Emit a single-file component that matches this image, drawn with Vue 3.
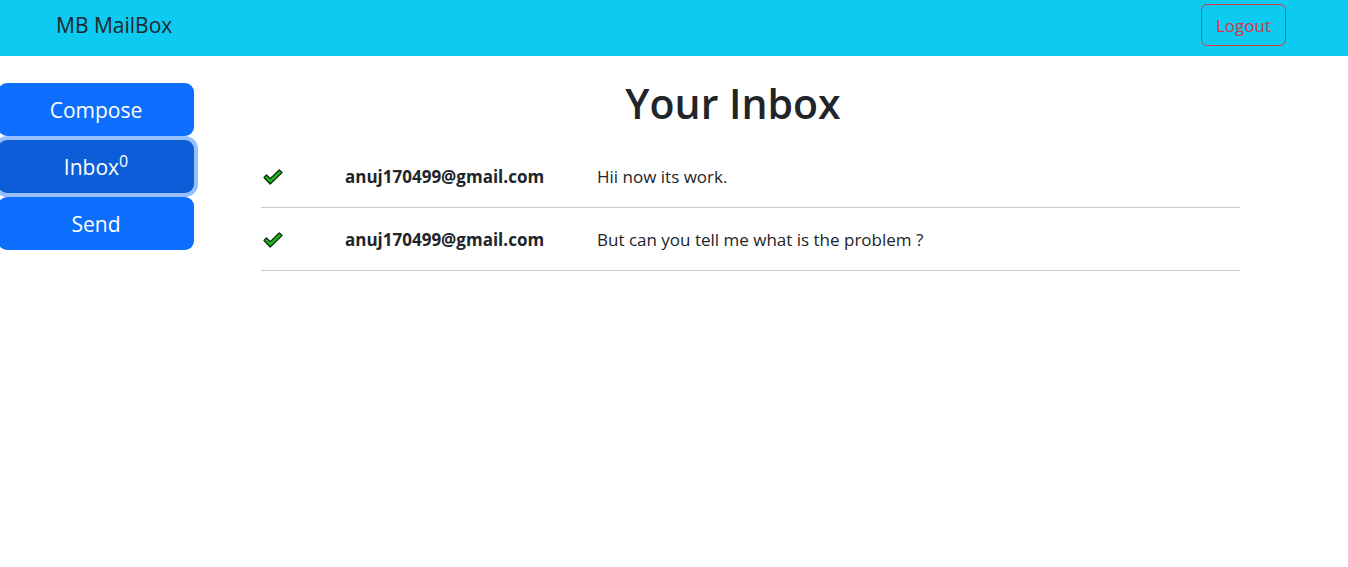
<script setup>
import { ref } from 'vue'

const folders = [
  { name: 'Compose' },
  { name: 'Inbox', count: 0 },
  { name: 'Send' },
]
const active = ref('Inbox')

const mails = [
  { id: 1, from: 'anuj170499@gmail.com', text: 'Hii now its work.' },
  { id: 2, from: 'anuj170499@gmail.com', text: 'But can you tell me what is the problem ?' },
]
</script>

<template>
  <header class="navbar">
    <a class="brand" href="#">MB MailBox</a>
    <button class="logout" type="button">Logout</button>
  </header>
  <div class="layout">
    <nav class="sidebar">
      <button
        v-for="f in folders"
        :key="f.name"
        type="button"
        class="folder"
        :class="{ active: active === f.name }"
        @click="active = f.name"
      >{{ f.name }}<sup v-if="f.count !== undefined">{{ f.count }}</sup></button>
    </nav>
    <main class="inbox">
      <h1>Your Inbox</h1>
      <ul class="mails">
        <li v-for="m in mails" :key="m.id" class="mail">
          <svg class="tick" viewBox="0 0 20 16" width="20" height="16" aria-hidden="true">
            <path d="M1 8.5 L3.5 6 L7.2 9.6 L16.2 1 L19 3.6 L7.2 15 Z" fill="#21b421" stroke="#0b2a0b" stroke-width="1.3" stroke-linejoin="round" />
          </svg>
          <strong class="from">{{ m.from }}</strong>
          <span class="text">{{ m.text }}</span>
        </li>
      </ul>
    </main>
  </div>
</template>

<style>
body {
  margin: 0;
  background: #fff;
}
</style>

<style scoped>
.navbar,
.layout {
  font-family: "Segoe UI", "Open Sans", "Noto Sans", sans-serif;
  color: #212529;
}
.navbar {
  display: flex;
  justify-content: space-between;
  align-items: flex-start;
  box-sizing: border-box;
  min-height: 56px;
  padding: 4px 62px 4px 56px;
  background: #0dcaf0;
}
.brand {
  font-size: 21px;
  line-height: 42px;
  color: #212529;
  text-decoration: none;
}
.logout {
  box-sizing: border-box;
  height: 42px;
  padding: 0 14px;
  border: 1px solid #dc3545;
  border-radius: 6px;
  background: transparent;
  color: #dc3545;
  font-family: inherit;
  font-size: 17px;
}
.layout {
  display: flex;
  padding: 27px 108px 0 0;
}
.sidebar {
  display: flex;
  flex-direction: column;
  gap: 4px;
  flex: 0 0 196px;
  margin-left: -2px;
}
.folder {
  height: 53px;
  padding: 0;
  border: 0;
  border-radius: 9px;
  background: #0d6efd;
  color: #fff;
  font-family: inherit;
  font-size: 21px;
}
.folder.active {
  background: #0b5ed7;
  box-shadow: 0 0 0 4px #96bffd;
}
.folder sup {
  position: relative;
  top: -8px;
  vertical-align: baseline;
  font-size: 16px;
  line-height: 0;
}
.inbox {
  flex: 1;
  margin-left: 32px;
}
h1 {
  margin: 0;
  font-size: 41px;
  font-weight: 600;
  line-height: 40px;
  text-align: center;
}
.mails {
  margin: 22px 0 0 35px;
  padding: 0;
  list-style: none;
}
.mail {
  display: grid;
  grid-template-columns: 84px 252px 1fr;
  align-items: center;
  box-sizing: border-box;
  min-height: 63px;
  padding-top: 2px;
  border-bottom: 1px solid #c8c9ca;
  font-size: 17px;
  line-height: 24px;
}
.tick {
  margin-left: 2px;
}
.from {
  font-weight: 700;
}
</style>
